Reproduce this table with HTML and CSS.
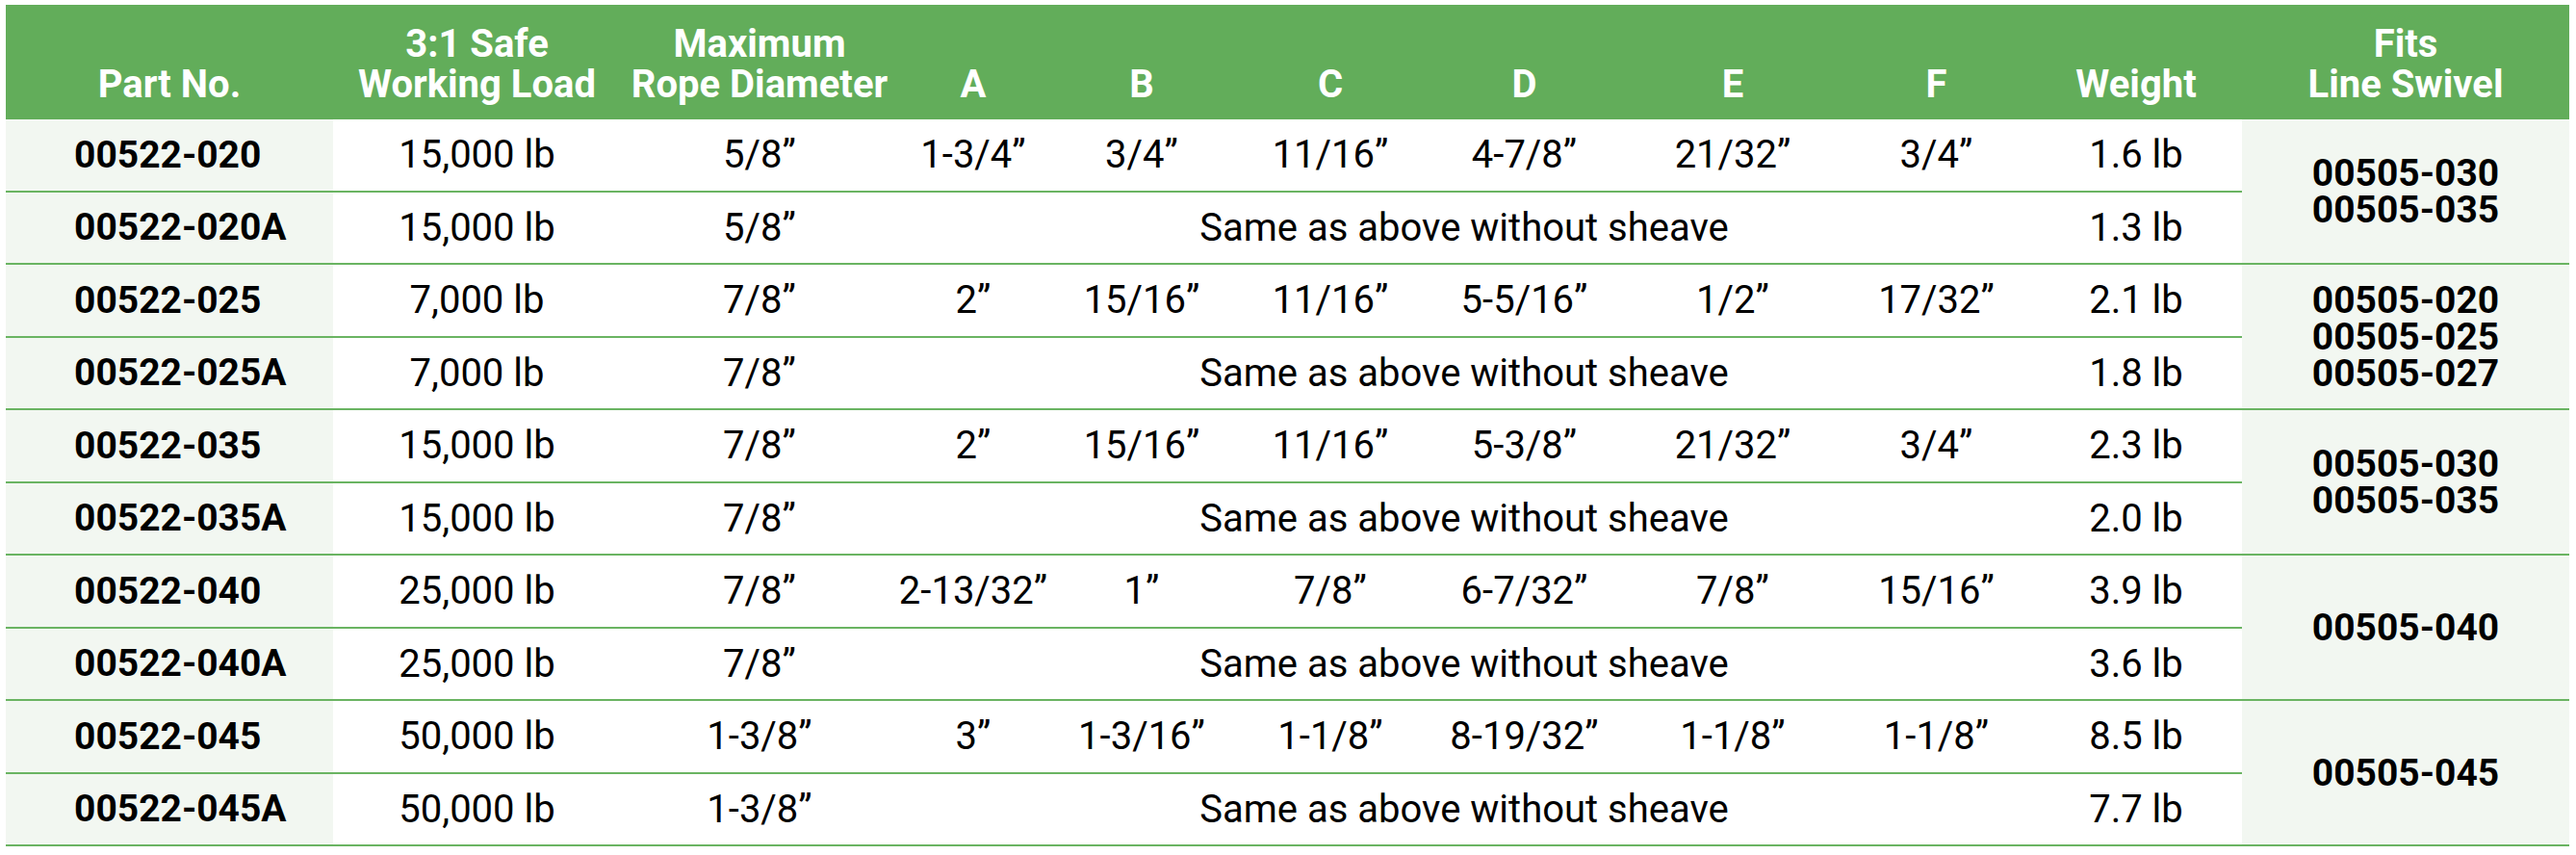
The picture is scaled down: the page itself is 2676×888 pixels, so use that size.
FILE: index.html
```html
<!DOCTYPE html>
<html lang="en">
<head>
<meta charset="utf-8">
<title>00522 Sheave Blocks</title>
<link rel="stylesheet" href="styles.css">
</head>
<body>
<table class="spec">
  <colgroup>
    <col class="c-part"><col class="c-load"><col class="c-rope"><col class="c-a"><col class="c-b"><col class="c-c"><col class="c-d"><col class="c-e"><col class="c-f"><col class="c-wt"><col class="c-fits">
  </colgroup>
  <thead>
    <tr>
      <th>Part No.</th>
      <th>3:1 Safe<br>Working Load</th>
      <th>Maximum<br>Rope Diameter</th>
      <th>A</th>
      <th>B</th>
      <th>C</th>
      <th>D</th>
      <th>E</th>
      <th>F</th>
      <th>Weight</th>
      <th>Fits<br>Line Swivel</th>
    </tr>
  </thead>
  <tbody>
    <tr>
      <td class="part">00522-020</td><td>15,000 lb</td><td>5/8”</td><td>1-3/4”</td><td>3/4”</td><td>11/16”</td><td>4-7/8”</td><td>21/32”</td><td>3/4”</td><td>1.6 lb</td>
      <td class="fits" rowspan="2">00505-030<br>00505-035</td>
    </tr>
    <tr>
      <td class="part">00522-020A</td><td>15,000 lb</td><td>5/8”</td><td colspan="6">Same as above without sheave</td><td>1.3 lb</td>
    </tr>
    <tr>
      <td class="part">00522-025</td><td>7,000 lb</td><td>7/8”</td><td>2”</td><td>15/16”</td><td>11/16”</td><td>5-5/16”</td><td>1/2”</td><td>17/32”</td><td>2.1 lb</td>
      <td class="fits" rowspan="2">00505-020<br>00505-025<br>00505-027</td>
    </tr>
    <tr>
      <td class="part">00522-025A</td><td>7,000 lb</td><td>7/8”</td><td colspan="6">Same as above without sheave</td><td>1.8 lb</td>
    </tr>
    <tr>
      <td class="part">00522-035</td><td>15,000 lb</td><td>7/8”</td><td>2”</td><td>15/16”</td><td>11/16”</td><td>5-3/8”</td><td>21/32”</td><td>3/4”</td><td>2.3 lb</td>
      <td class="fits" rowspan="2">00505-030<br>00505-035</td>
    </tr>
    <tr>
      <td class="part">00522-035A</td><td>15,000 lb</td><td>7/8”</td><td colspan="6">Same as above without sheave</td><td>2.0 lb</td>
    </tr>
    <tr>
      <td class="part">00522-040</td><td>25,000 lb</td><td>7/8”</td><td>2-13/32”</td><td>1”</td><td>7/8”</td><td>6-7/32”</td><td>7/8”</td><td>15/16”</td><td>3.9 lb</td>
      <td class="fits" rowspan="2">00505-040</td>
    </tr>
    <tr>
      <td class="part">00522-040A</td><td>25,000 lb</td><td>7/8”</td><td colspan="6">Same as above without sheave</td><td>3.6 lb</td>
    </tr>
    <tr>
      <td class="part">00522-045</td><td>50,000 lb</td><td>1-3/8”</td><td>3”</td><td>1-3/16”</td><td>1-1/8”</td><td>8-19/32”</td><td>1-1/8”</td><td>1-1/8”</td><td>8.5 lb</td>
      <td class="fits" rowspan="2">00505-045</td>
    </tr>
    <tr>
      <td class="part">00522-045A</td><td>50,000 lb</td><td>1-3/8”</td><td colspan="6">Same as above without sheave</td><td>7.7 lb</td>
    </tr>
  </tbody>
</table>
</body>
</html>
```

FILE: styles.css
```css
html, body {
  margin: 0;
  padding: 0;
  background: #ffffff;
}

body {
  padding: 5px 0 0 6px;
  font-family: Roboto, "Liberation Sans", Arial, sans-serif;
  color: #000000;
}

.spec {
  width: 2663px;
  table-layout: fixed;
  border-collapse: collapse;
  border-spacing: 0;
  font-size: 40px;
}

.c-part { width: 340px; }
.c-load { width: 299px; }
.c-rope { width: 288px; }
.c-a { width: 156px; }
.c-b { width: 194px; }
.c-c { width: 198px; }
.c-d { width: 205px; }
.c-e { width: 228px; }
.c-f { width: 195px; }
.c-wt { width: 220px; }
.c-fits { width: 340px; }

.spec th {
  background: #62ad5a;
  color: #ffffff;
  font-weight: 700;
  line-height: 42px;
  height: 119px;
  padding: 0 0 15px 0;
  box-sizing: border-box;
  vertical-align: bottom;
  text-align: center;
  white-space: nowrap;
}

.spec td {
  height: 73.5px;
  padding: 0;
  text-align: center;
  vertical-align: middle;
  white-space: nowrap;
  border-bottom: 2px solid #6ab462;
  font-weight: 400;
}

.spec td.part {
  background: #f2f7f1;
  font-weight: 700;
  font-size: 39px;
  text-align: left;
  padding-left: 71px;
}

.spec td.fits {
  background: #f2f7f1;
  font-weight: 700;
  font-size: 39px;
  line-height: 38px;
}
```
